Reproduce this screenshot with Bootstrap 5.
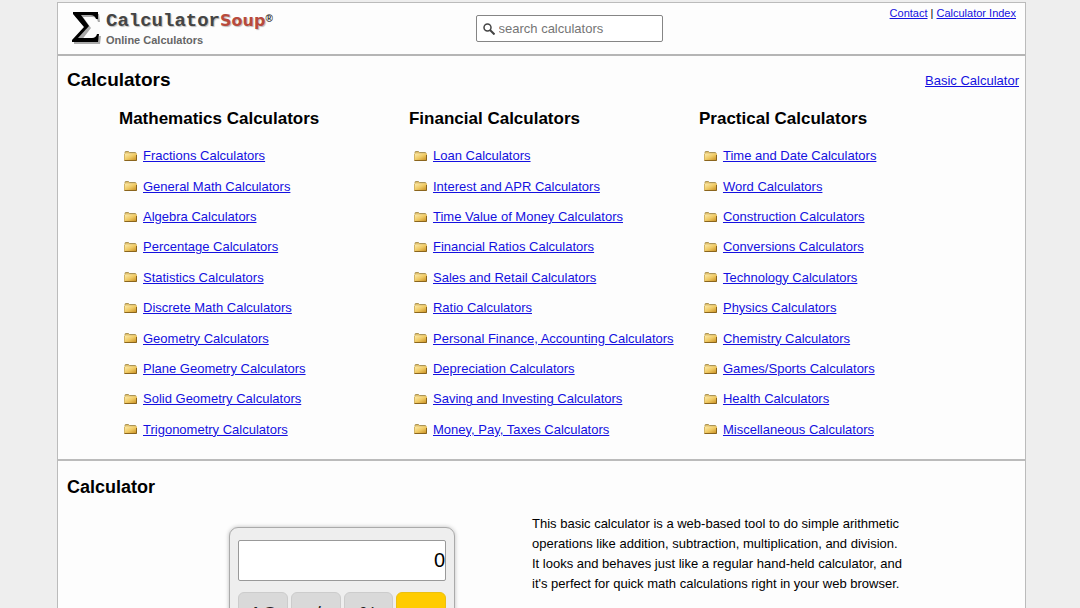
<!DOCTYPE html>
<html lang="en">
<head>
<meta charset="utf-8">
<meta name="viewport" content="width=device-width, initial-scale=1">
<title>CalculatorSoup - Online Calculators</title>
<link href="https://cdn.jsdelivr.net/npm/bootstrap@5.3.0/dist/css/bootstrap.min.css" rel="stylesheet">
<style>
  body { background: #eee; color: #000; font-family: "Liberation Sans", Arial, sans-serif; font-size: 13px; line-height: 20px; padding: 2px 54px 0 57px; }
  a { color: #1410e0; }
  h1, h2, h3 { font-weight: 700; margin: 0; }
  .sheet { background: #fdfdfd; border: 1px solid #bbb; }
  .masthead { height: 53px; border-bottom: 2px solid #b5b5b5; }
  .brand { color: #444; gap: 5px; padding: 7px 0 0 14px; }
  .brand-name { font-family: "Liberation Mono", "Courier New", monospace; font-size: 19px; line-height: 18px; font-weight: 700; text-shadow: 1px 1px 1px #bbb; }
  .brand-soup { font-family: "DejaVu Sans", Verdana, sans-serif; font-size: 16px; color: #b84a3c; }
  .brand-reg { font-family: "Liberation Sans", Arial, sans-serif; font-size: 10px; font-weight: 700; vertical-align: 4px; color: #222; text-shadow: none; }
  .tagline { font-size: 11px; line-height: 20px; font-weight: 700; color: #666; }
  .search { width: 187px; height: 27px; margin: 12px 0 0 50px; padding: 0 6px; gap: 4px; border: 1px solid #858585; border-radius: 2px; background: #fff; }
  .search input { font-size: 13px; color: #000; outline: 0; min-width: 0; }
  .search input::placeholder { color: #757575; opacity: 1; }
  .toplinks { font-size: 11px; line-height: 20px; padding-right: 9px; }
  .index { padding: 13px 6px 14px 9px; border-bottom: 2px solid #bbb; }
  .index h1 { font-size: 19px; line-height: 22px; }
  .groups { padding: 16px 30px 0 52px; }
  .groups h2 { font-size: 17px; line-height: 24px; margin-bottom: 10px; }
  .folders { height: 304px; padding-left: 5px; }
  .folders li { gap: 6px; }
  .calc { padding: 15px 9px 0; }
  .calc h2 { font-size: 18px; line-height: 22px; }
  .machine { width: 226px; margin: 29px 0 0 162px; padding: 12px 8px; border: 1px solid #aaa; border-radius: 9px; background: #eee; box-shadow: 0 0 4px #bbb; }
  .readout { height: 41px; font-size: 20px; padding: 0; border: 1px solid #999; border-radius: 2px; background: #fff; text-align: right; }
  .keys { display: grid; grid-template-columns: repeat(4, 1fr); gap: 3px; margin-top: 11px; }
  .keys button { height: 44px; padding: 0; border: 1px solid #ccc; border-radius: 6px; background: #d9d9d9; font-size: 20px; line-height: 20px; color: #222; }
  .keys .key-op { background: #fc0; border-color: #ecc010; }
  .about { width: 374px; margin: 16px 0 0 77px; }
</style>
</head>
<body class="overflow-hidden vh-100">
<svg class="position-absolute" width="0" height="0" aria-hidden="true">
  <defs>
    <linearGradient id="gold" x1="0" y1="0" x2="1" y2="1"><stop offset="0" stop-color="#fdeeb4"/><stop offset=".5" stop-color="#f0cb66"/><stop offset="1" stop-color="#c58a1c"/></linearGradient>
  </defs>
  <symbol id="folder" viewBox="0 0 13 11">
    <path d="M1 8V1.500Q1 0.500 1.500 0.500H4.500L5.500 1.500H11Q12 1.500 12 2.500V8Z" fill="#e0bf6a" stroke="#ab9558"/>
    <path d="M0 2.500H13V9.500H0Z" fill="url(#gold)"/>
    <path d="M.5 3V9.500" stroke="#d3b566"/>
    <path d="M.5 9.500H12.500V4" fill="none" stroke="#8a651e"/>
  </symbol>
</svg>
<div class="sheet">
  <header class="masthead row g-0">
    <div class="col brand d-flex">
      <svg width="29" height="35" viewBox="0 0 29 35" aria-hidden="true">
        <path d="M3 4H27L28 12H26Q25 7 20 7H11L19 18L9 31H21Q26 31 27 26H29L28 34H2V32L14 19L3 6Z" fill="#aaa"/>
        <path d="M1 2H26V9H24Q23 5 18 5H9L17 16L6 28H20Q24 28 25 24H27L26 32H0V30L12 17L1 4Z" fill="#000"/>
      </svg>
      <div>
        <div class="brand-name text-nowrap">Calculator<span class="brand-soup">Soup</span><span class="brand-reg">®</span></div>
        <div class="tagline">Online Calculators</div>
      </div>
    </div>
    <form class="search col-auto d-flex align-items-center" role="search">
      <svg class="flex-shrink-0" width="12" height="12" viewBox="0 0 12 12" fill="none" stroke="#444" aria-hidden="true"><circle cx="4.500" cy="4.500" r="3.500" stroke-width="1.500"/><path d="M7 7L11.500 11.500" stroke-width="2"/></svg>
      <input type="search" class="border-0 p-0 flex-fill w-100 bg-transparent" placeholder="search calculators" aria-label="search calculators">
    </form>
    <nav class="toplinks col text-end"><a href="#">Contact</a> | <a href="#">Calculator Index</a></nav>
  </header>
  <main>
    <section class="index">
      <div class="d-flex justify-content-between align-items-end"><h1>Calculators</h1><a href="#calc">Basic Calculator</a></div>
      <div class="groups row g-0">
        <div class="col-4"><h2>Mathematics Calculators</h2><ul class="folders list-unstyled d-flex flex-column mb-0 text-nowrap" data-items="Fractions|General Math|Algebra|Percentage|Statistics|Discrete Math|Geometry|Plane Geometry|Solid Geometry|Trigonometry"></ul></div>
        <div class="col-4"><h2>Financial Calculators</h2><ul class="folders list-unstyled d-flex flex-column mb-0 text-nowrap" data-items="Loan|Interest and APR|Time Value of Money|Financial Ratios|Sales and Retail|Ratio|Personal Finance, Accounting|Depreciation|Saving and Investing|Money, Pay, Taxes"></ul></div>
        <div class="col-4"><h2>Practical Calculators</h2><ul class="folders list-unstyled d-flex flex-column mb-0 text-nowrap" data-items="Time and Date|Word|Construction|Conversions|Technology|Physics|Chemistry|Games/Sports|Health|Miscellaneous"></ul></div>
      </div>
    </section>
    <section class="calc" id="calc">
      <h2>Calculator</h2>
      <div class="d-flex align-items-start">
        <div class="machine flex-shrink-0">
          <input class="readout d-block w-100" value="0" aria-label="Result" readonly>
          <div class="keys"><button type="button">AC</button><button type="button">+/-</button><button type="button">%</button><button type="button" class="key-op">÷</button></div>
        </div>
        <p class="about">This basic calculator is a web-based tool to do simple arithmetic operations like addition, subtraction, multiplication, and division. It looks and behaves just like a regular hand-held calculator, and it's perfect for quick math calculations right in your web browser.</p>
      </div>
    </section>
  </main>
</div>
<script>
  document.querySelectorAll('.folders').forEach(list => {
    list.innerHTML = list.dataset.items.split('|').map(name =>
      `<li class="d-flex align-items-center flex-fill"><svg width="13" height="11" aria-hidden="true"><use href="#folder"/></svg><a href="#">${name} Calculators</a></li>`).join('');
  });
</script>
<script src="https://cdn.jsdelivr.net/npm/bootstrap@5.3.0/dist/js/bootstrap.bundle.min.js"></script>
</body>
</html>
